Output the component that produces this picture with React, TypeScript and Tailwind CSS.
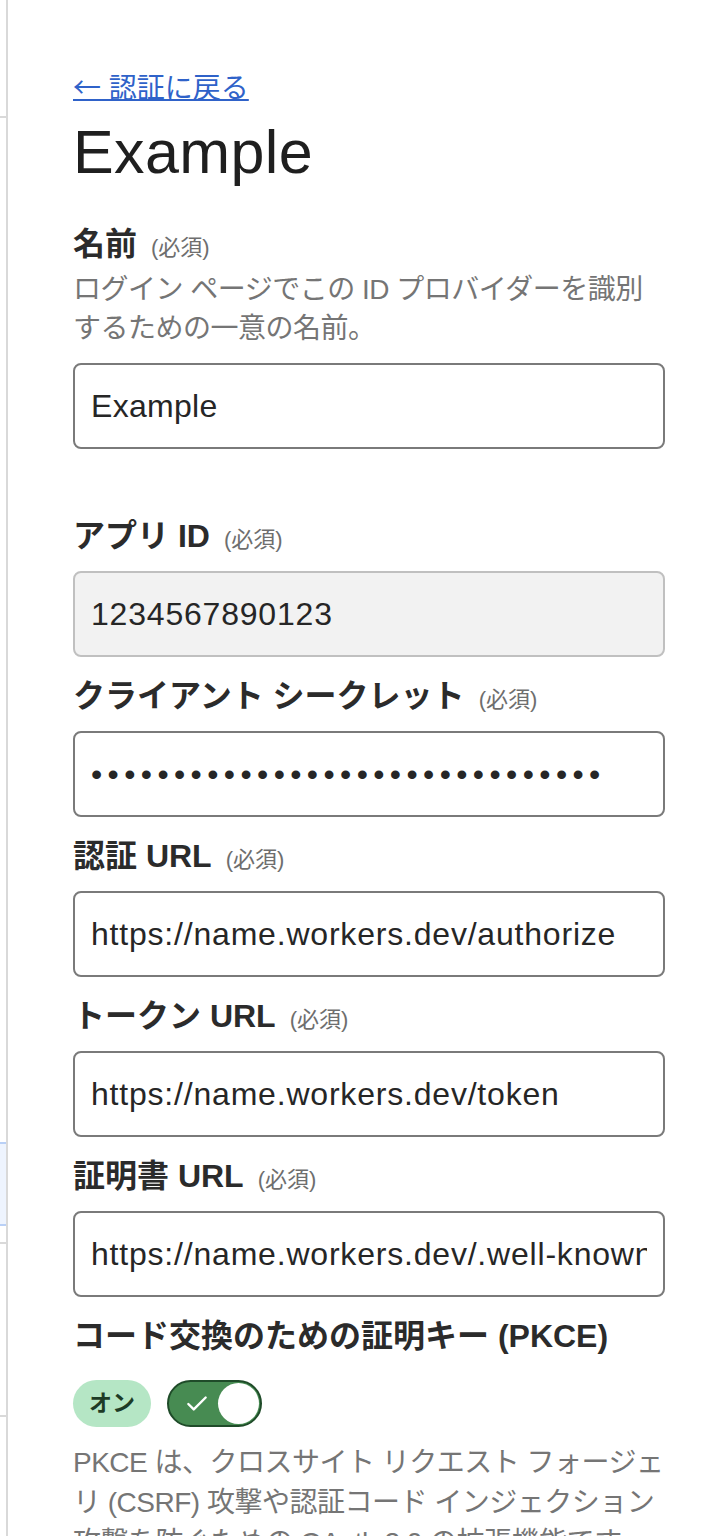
import { Check } from 'lucide-react'

interface Field {
  label: string
  value: string
  type?: string
  locked?: boolean
}

const FIELDS: Field[] = [
  { label: 'アプリ ID', value: '1234567890123', locked: true },
  { label: 'クライアント シークレット', value: 'abcdefghijklmnopqrstuvwxyz01234', type: 'password' },
  { label: '認証 URL', value: 'https://name.workers.dev/authorize' },
  { label: 'トークン URL', value: 'https://name.workers.dev/token' },
  { label: '証明書 URL', value: 'https://name.workers.dev/.well-known/jwks.json' },
]

function Label({ text, required = true, className = '' }: { text: string; required?: boolean; className?: string }) {
  return (
    <label className={`block h-[44px] whitespace-nowrap text-[32px] leading-[44px] font-bold text-[#2b2b2b] ${className}`}>
      {text}
      {required && <span className="ml-[14px] text-[22px] font-normal text-[#6e6e6e]">(必須)</span>}
    </label>
  )
}

function TextInput({ field }: { field: Field }) {
  return (
    <input
      type={field.type || 'text'}
      defaultValue={field.value}
      readOnly={field.locked}
      className={`mt-[13px] block h-[86px] w-full rounded-[8px] border-2 px-4 text-[32px] text-[#262626] outline-none ${
        field.locked ? 'border-[#c0c0c0] bg-[#f2f2f2]' : 'border-[#7a7a7a] bg-white'
      } ${field.type === 'password' ? 'tracking-[5.4px]' : 'tracking-[0.8px]'}`}
    />
  )
}

export default function App() {
  return (
    <div className="flex h-[1536px] overflow-hidden bg-white font-['Liberation_Sans','Noto_Sans_CJK_JP',sans-serif]">
      {/* clipped nav rail */}
      <aside className="flex w-[8px] shrink-0 flex-col border-r-2 border-[#d9d9d9]">
        <div className="h-[116px]" />
        <div className="h-[2px] bg-[#d9d9d9]" />
        <div className="h-[1024px]" />
        <div className="h-[84px] border-y-2 border-[#b9d0f6] bg-[#eef4fe]" />
        <div className="h-[16px]" />
        <div className="h-[2px] bg-[#d9d9d9]" />
        <div className="h-[171px]" />
        <div className="h-[2px] bg-[#d9d9d9]" />
      </aside>

      <main className="ml-[65px] w-[592px] shrink-0 pt-[68px]">
        <div className="h-[36px]">
          <a href="#" className="inline-block text-[28px] leading-[36px] text-[#2f62c9] underline decoration-2">
            <span className="font-['Noto_Sans_CJK_JP',sans-serif]">←</span> 認証に戻る
          </a>
        </div>
        <h1 className="mt-[12px] text-[61px] leading-[72px] font-normal tracking-[0.4px] text-[#1f1f1f]">Example</h1>

        <Label text="名前" className="mt-[34px]" />
        <p className="mt-[4px] text-[28px] leading-[39px] tracking-[-0.5px] text-[#757575]">
          ログイン ページでこの ID プロバイダーを識別するための一意の名前。
        </p>
        <input
          type="text"
          defaultValue="Example"
          className="mt-[15px] block h-[86px] w-full rounded-[8px] border-2 border-[#7a7a7a] bg-white px-4 text-[32px] tracking-[0.3px] text-[#262626] outline-none"
        />

        {FIELDS.map((f, i) => (
          <div key={f.label} className={i === 0 ? 'mt-[65px]' : 'mt-[17px]'}>
            <Label text={f.label} />
            <TextInput field={f} />
          </div>
        ))}

        <Label text="コード交換のための証明キー (PKCE)" required={false} className="mt-[17px]" />
        <div className="mt-[22px] flex items-center gap-[16px]">
          <span className="flex h-[47px] items-center rounded-full bg-[#b5e6c5] px-[16px] text-[23px] font-bold text-[#1d3b26]">
            オン
          </span>
          <button
            type="button"
            role="switch"
            aria-checked="true"
            className="flex h-[47px] w-[95px] items-center justify-between rounded-full border-2 border-[#1f4b29] bg-[#478b52] pl-[15px] pr-[1px]"
          >
            <Check size={26} strokeWidth={2.2} className="text-white" />
            <span className="h-[41px] w-[41px] rounded-full bg-white" />
          </button>
        </div>
        <p className="mt-[16px] whitespace-nowrap text-[28px] leading-[40px] tracking-[-0.5px] text-[#757575]">
          PKCE は、クロスサイト リクエスト フォージェ
          <br />
          リ (CSRF) 攻撃や認証コード インジェクション
          <br />
          攻撃を防ぐための OAuth 2.0 の拡張機能です。
        </p>
      </main>
    </div>
  )
}
